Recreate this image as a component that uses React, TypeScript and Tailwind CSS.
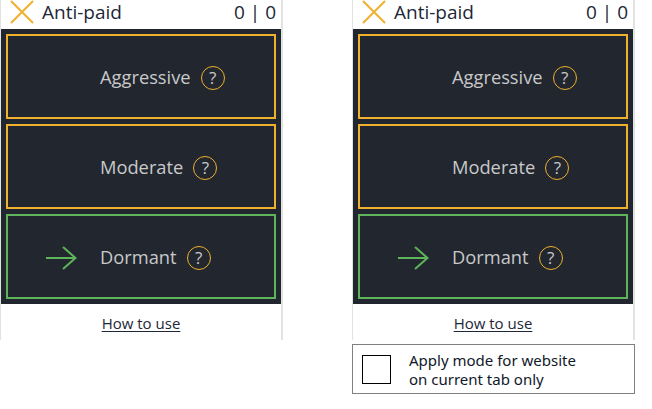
import React from "react";

const YELLOW = "#efb12d";
const GREEN = "#5fb35a";

function Help() {
  return (
    <span className="ml-[10px] flex h-[24px] w-[24px] items-center justify-center rounded-full border-[1.5px] border-[#efb12d] text-[17px] leading-none text-[#c9c9c9]">
      ?
    </span>
  );
}

function ModeButton({ label, active }: { label: string; active?: boolean }) {
  return (
    <div
      className={`flex h-[85px] items-center border-2 pt-[2px] ${active ? "border-[#5fb35a]" : "border-[#efb12d]"}`}
    >
      <div className="flex w-[92px] shrink-0 items-center pl-[38px]">
        {active && (
          <svg width="31" height="24" viewBox="0 0 31 24" fill="none" stroke={GREEN} strokeWidth="2">
            <path d="M0 12 H29.5" />
            <path d="M17 1 L29.5 12 L17 23" />
          </svg>
        )}
      </div>
      <span className="text-[18.3px] leading-none text-[#c9c9c9]">{label}</span>
      <Help />
    </div>
  );
}

function Panel() {
  return (
    <div className="flex h-[340px] w-[283px] flex-col border-l border-r-2 border-[#e2e2e2] bg-white">
      <div className="flex h-[29px] items-start justify-between pl-[9px] pr-[5px]">
        <div className="flex items-center">
          <svg width="24" height="24" viewBox="0 0 24 24" fill="none" stroke={YELLOW} strokeWidth="2" className="mt-[-1px]">
            <path d="M1 1 L23 23 M23 1 L1 23" />
          </svg>
          <span className="ml-[8px] text-[19px] leading-[24px] text-[#1d2737]">Anti-paid</span>
        </div>
        <span className="text-[19px] leading-[24px] text-[#1d2737]">0 | 0</span>
      </div>
      <div className="flex flex-col gap-[5px] bg-[#21262f] p-[5px]">
        <ModeButton label="Aggressive" />
        <ModeButton label="Moderate" />
        <ModeButton label="Dormant" active />
      </div>
      <div className="flex justify-center pt-[9px]">
        <span className="text-[15px] leading-[20px] text-[#1d2737] underline underline-offset-[2px]">How to use</span>
      </div>
    </div>
  );
}

export default function App() {
  return (
    <div className="h-[409px] w-[652px] bg-white" style={{ fontFamily: '"Open Sans", "Noto Sans", sans-serif' }}>
      <div className="flex gap-[69px]">
        <Panel />
        <div className="flex flex-col">
          <Panel />
          <div className="mt-[4px] flex h-[50px] w-[283px] items-center border border-[#808080] pl-[9px]">
            <div className="h-[29px] w-[29px] border border-black" />
            <div className="ml-[18px] pt-[2px] text-[15px] leading-[19px] text-[#10182a]" style={{ fontFamily: '"Noto Sans", sans-serif' }}>
              <div>Apply mode for website</div>
              <div>on current tab only</div>
            </div>
          </div>
        </div>
      </div>
    </div>
  );
}
